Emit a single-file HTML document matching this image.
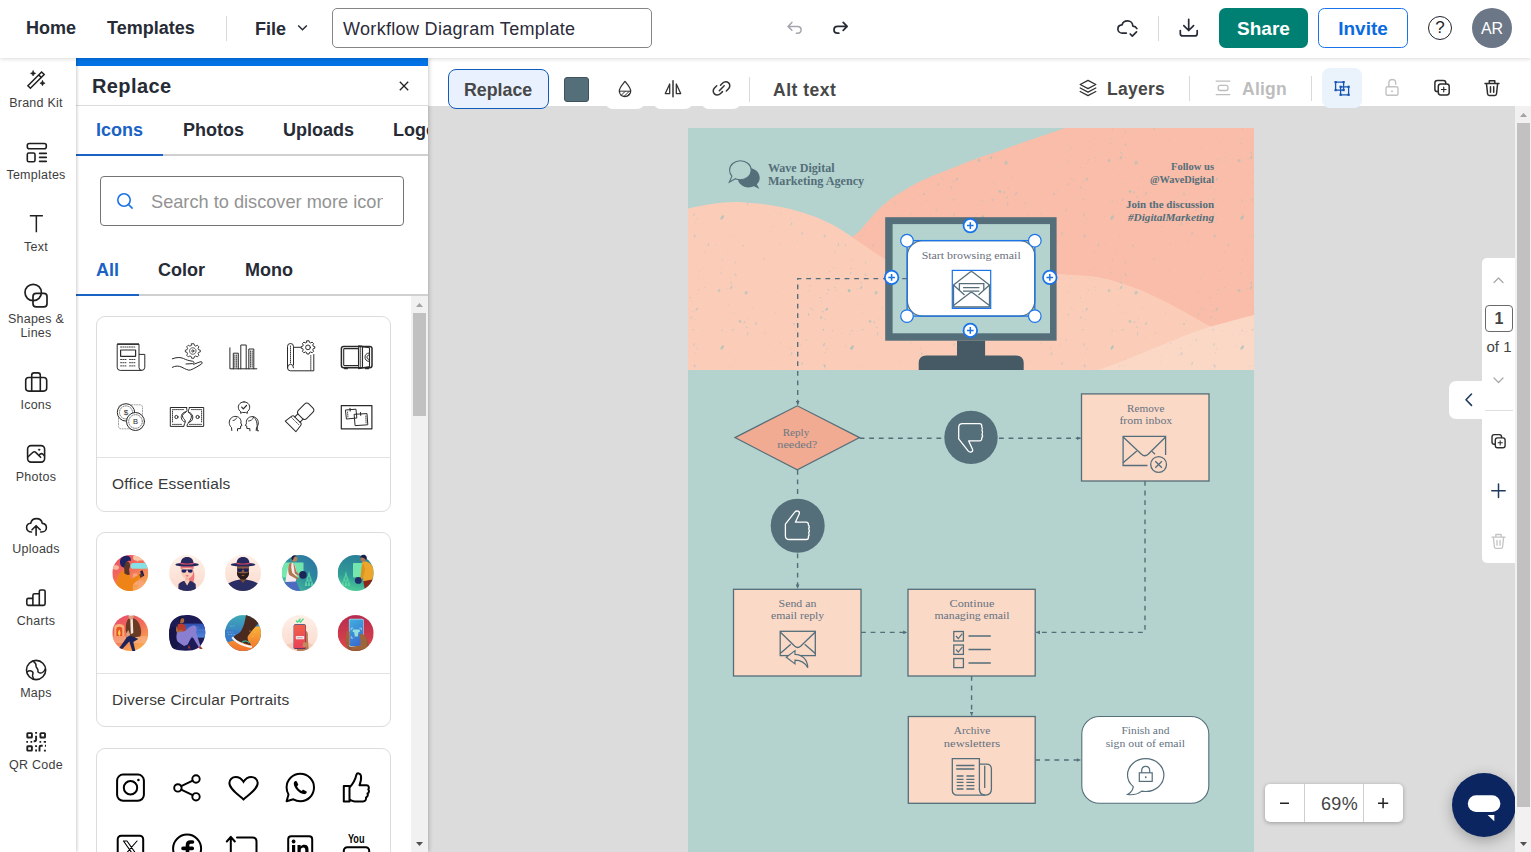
<!DOCTYPE html>
<html lang="en">
<head>
<meta charset="utf-8">
<title>Workflow Diagram Template</title>
<style>
*{box-sizing:border-box;margin:0;padding:0}
html,body{width:1531px;height:852px;overflow:hidden;background:#fff;font-family:"Liberation Sans",sans-serif;color:#2b2f38}
.abs{position:absolute}
svg{display:block;overflow:visible}
/* header */
#hdr{position:absolute;left:0;top:0;width:1531px;height:58px;background:#fff;box-shadow:0 1px 4px rgba(0,0,0,.15);z-index:30}
#hdr .nav{position:absolute;top:17px;font-weight:bold;font-size:18px;line-height:22px;color:#262b36;white-space:nowrap}
.vdiv{position:absolute;width:1px;background:#d9d9d9}
#title{position:absolute;left:332px;top:8px;width:320px;height:40px;border:1px solid #858585;border-radius:5px;font-size:18px;line-height:40px;padding-left:10px;color:#2b2b3a;white-space:nowrap;letter-spacing:.32px}
.btn{position:absolute;top:8px;height:40px;border-radius:6.5px;font-weight:bold;font-size:19px;line-height:42px;text-align:center}
/* sidebar */
#side{position:absolute;left:0;top:57px;width:76px;height:795px;background:#fff;z-index:20;box-shadow:1px 0 3px rgba(0,0,0,.2)}
.sitem{position:absolute;left:0;width:72px;text-align:center;font-size:12.5px;line-height:14px;color:#3d3d3d;letter-spacing:.25px}
.sicon{position:absolute;left:24px;width:24px;height:24px}
/* panel */
#panel{position:absolute;left:76px;top:58px;width:352px;height:794px;background:#fff;z-index:10;overflow:hidden;box-shadow:1px 0 4px rgba(0,0,0,.22)}
.ptab{position:absolute;top:61px;font-weight:bold;font-size:18px;line-height:22px;color:#262b36;white-space:nowrap}
.stab{position:absolute;top:201px;font-weight:bold;font-size:18px;line-height:22px;color:#262b36;white-space:nowrap}
.card{position:absolute;left:20px;width:295px;border:1px solid #dcdcdc;border-radius:9px;background:#fff}
.card .lbl{position:absolute;left:15px;font-size:15.5px;line-height:18px;color:#3a3a3a;white-space:nowrap;letter-spacing:.2px}
.card .hr{position:absolute;left:0;right:0;height:1px;background:#e2e2e2}
/* toolbar */
#tbar{position:absolute;left:428px;top:58px;width:1103px;height:48px;background:#fff;z-index:5}
.tbtxt{position:absolute;font-weight:bold;font-size:18px;line-height:22px;white-space:nowrap}
/* canvas */
#canvas{position:absolute;left:428px;top:106px;width:1088px;height:746px;background:#dcdcdc;overflow:hidden}
#vscroll{position:absolute;left:1515px;top:106px;width:16px;height:746px;background:#f1f1f1;z-index:6}
</style>
</head>
<body>

<!-- ================= HEADER ================= -->
<div id="hdr">
  <div class="nav" style="left:26px">Home</div>
  <div class="nav" style="left:107px">Templates</div>
  <div class="vdiv" style="left:226px;top:16px;height:25px"></div>
  <div class="nav" style="left:255px;top:18px">File</div>
  <svg class="abs" style="left:297px;top:24px" width="11" height="8" viewBox="0 0 11 8"><path d="M1.2 1.5 L5.5 5.8 L9.8 1.5" fill="none" stroke="#262b36" stroke-width="1.5"/></svg>
  <div id="title">Workflow Diagram Template</div>
  <svg class="abs" style="left:780px;top:14px" width="80" height="28" viewBox="780 14 80 28" fill="none" stroke-linecap="round" stroke-linejoin="round">
    <path d="M791.900 22.400 L788 26.400 L791.900 30.300 M788 26.400 L797.600 26.400 Q801.100 26.400 801.100 29.800 Q801.100 33.200 797.600 33.200 L796.300 33.200" stroke="#a3a6ad" stroke-width="1.500"/>
    <path d="M843.200 22.400 L847.100 26.400 L843.200 30.300 M847.100 26.400 L837.500 26.400 Q834 26.400 834 29.800 Q834 33.200 837.500 33.200 L838.800 33.200" stroke="#262b36" stroke-width="1.800"/>
  </svg>
  <svg class="abs" style="left:1110px;top:14px" width="100" height="28" viewBox="1110 14 100 28" fill="none" stroke="#262b36" stroke-width="1.700" stroke-linecap="round" stroke-linejoin="round">
    <path d="M1126.300 33.100 L1122.400 33.100 C1119.900 33.100 1117.900 31.200 1117.900 28.900 C1117.900 26.600 1119.700 24.900 1122.100 24.800 C1122.700 22.500 1124.900 20.900 1127.500 20.900 C1130.500 20.900 1132.800 23.200 1132.800 26.100 C1134.600 26.200 1136.100 27.100 1136.900 28.600"/>
    <path d="M1130.200 34 L1132.300 36.100 L1136.500 31.900"/>
    <path d="M1188.700 19.300 L1188.700 30.400 M1183.800 25.600 L1188.700 30.500 L1193.600 25.600"/>
    <path d="M1180.300 30.500 L1180.300 33.400 Q1180.300 35.900 1182.800 35.900 L1194.700 35.900 Q1197.200 35.900 1197.200 33.400 L1197.200 30.500"/>
  </svg>
  <div class="vdiv" style="left:1158px;top:16px;height:25px"></div>
  <div class="abs" style="left:1428px;top:16px;width:24px;height:24px;border:1.500px solid #1f232b;border-radius:50%;font-size:17px;line-height:21px;text-align:center;color:#1f232b">?</div>
  <div class="btn" style="left:1219px;width:89px;background:#008073;color:#fff">Share</div>
  <div class="btn" style="left:1318px;width:90px;border:1.500px solid #1a73e8;color:#0a6be0;line-height:39px">Invite</div>
  <div class="abs" style="left:1472px;top:8px;width:40px;height:40px;border-radius:50%;background:#6b7787;color:#fff;font-size:16px;line-height:42px;text-align:center">AR</div>
</div>

<!-- ================= SIDEBAR ================= -->
<div id="side">
  <svg class="abs" style="left:0;top:0" width="76" height="795" viewBox="0 57 76 795" fill="none" stroke="#1f1f1f" stroke-width="1.600" stroke-linecap="round" stroke-linejoin="round">
    <!-- brand kit wand -->
    <path d="M27.900 85.800 L41.600 72 L44.200 74.500 L30.400 88.200Z M38.700 74.900 L41.300 77.500" stroke-width="1.500" stroke-linejoin="miter"/>
    <path d="M33.100 70.800 Q33.400 73.100 35.700 73.400 Q33.400 73.700 33.100 76 Q32.800 73.700 30.500 73.400 Q32.800 73.100 33.100 70.800Z M42.500 80.600 Q42.800 82.900 45.100 83.200 Q42.800 83.500 42.500 85.800 Q42.200 83.500 39.900 83.200 Q42.200 82.900 42.500 80.600Z" fill="#1f1f1f" stroke-width="0.600"/>
    <!-- templates -->
    <rect x="27.300" y="143.500" width="19" height="5.200" rx="2"/>
    <rect x="27.300" y="153" width="7.700" height="8.700" rx="1.500"/>
    <path d="M39.600 153.400 L46.300 153.400 M39.600 157.400 L46.300 157.400 M39.600 161.400 L46.300 161.400"/>
    <!-- text -->
    <path d="M29.800 215.800 L42.900 215.800 M36.350 215.800 L36.350 232.200" stroke-width="1.500" stroke-linecap="butt"/>
    <!-- shapes -->
    <circle cx="33.200" cy="292.500" r="8.200" stroke-width="1.700"/>
    <rect x="33" y="293.400" width="14" height="13.500" rx="3.200" stroke-width="1.700"/>
    <!-- icons briefcase -->
    <rect x="25.700" y="377.500" width="21" height="13.600" rx="3"/>
    <path d="M31.700 391 L31.700 375.300 Q31.700 372.900 34.100 372.900 L37.900 372.900 Q40.300 372.900 40.300 375.300 L40.300 391"/>
    <!-- photos -->
    <rect x="27.600" y="445.600" width="17" height="16.500" rx="3.500"/>
    <path d="M27.800 457 L32.700 452.500 Q34.400 451 36 452.600 L40.600 457.300 M38.800 455.500 L40.200 454.200 Q41.600 453 42.900 454.300 L44.400 455.800"/>
    <circle cx="39.100" cy="449.700" r="0.700" fill="#1f1f1f" stroke-width="0.800"/>
    <!-- uploads -->
    <path d="M31.500 532 C28.500 532 26.600 530 26.600 527.600 C26.600 525.200 28.400 523.400 30.700 523.300 C31.300 520.500 33.700 518.600 36.500 518.600 C39.400 518.600 41.800 520.600 42.300 523.400 C44.700 523.600 46.400 525.400 46.400 527.700 C46.400 530.100 44.500 532 41.700 532 L40.700 532"/>
    <path d="M36.100 535.200 L36.100 526 M32 529.800 L36.100 525.700 L40.200 529.800"/>
    <!-- charts -->
    <path d="M32.900 605.400 L28.400 605.400 Q26.800 605.400 26.800 603.800 L26.800 600 Q26.800 598.400 28.400 598.400 L32.900 598.400 M39.300 605.400 L32.900 605.400 L32.900 595.400 Q32.900 593.800 34.500 593.800 L39.300 593.800 M39.300 605.400 L39.300 591.600 Q39.300 590 40.900 590 L43.500 590 Q45.100 590 45.100 591.600 L45.100 603.800 Q45.100 605.400 43.500 605.400Z"/>
    <!-- maps -->
    <circle cx="36.100" cy="670" r="9.600"/>
    <path d="M33.200 661.200 C35.500 663 36.300 664.600 36 666 C35.700 667.400 38.500 669 38 671 C37.500 673 41 673.500 42.500 672.500 C43.600 671.700 44.800 670.400 45.300 669 M27 672 C28.500 670.800 30.500 670.300 32 671.300 C33.500 672.300 33.200 673.500 32.600 675 C32.100 676.200 33.300 677.500 33.500 678.900" stroke-width="1.500"/>
    <!-- qr -->
    <g stroke-width="1.900" stroke-linejoin="miter" stroke-linecap="butt">
      <rect x="27.300" y="733.100" width="4.600" height="4.400" rx="0.600"/>
      <rect x="40.400" y="733.100" width="4.600" height="4.400" rx="0.600"/>
      <rect x="27.300" y="746.200" width="4.600" height="4.400" rx="0.600"/>
      <path d="M36.100 732.100 L36.100 733.700 M36.100 735.800 L36.100 739.600 Q36.100 741.200 34.500 741.200 L33.700 741.200 M26.300 741.900 L28 741.900 M30.500 741.900 L32.200 741.900 M39.500 741.900 L41.200 741.900 M43.700 741.900 L46 741.900 M36.100 745.300 L36.100 747 M36.100 749.400 L36.100 751.500 M39.500 751.500 L39.500 747.200 Q39.500 745.800 40.900 745.800 L42.700 745.800 M44.900 745.800 L46 745.800 M44.900 749.800 L44.900 751.500"/>
    </g>
  </svg>
  <div class="sitem" style="top:39px">Brand Kit</div>
  <div class="sitem" style="top:111px">Templates</div>
  <div class="sitem" style="top:183px">Text</div>
  <div class="sitem" style="top:255px">Shapes &amp;<br>Lines</div>
  <div class="sitem" style="top:341px">Icons</div>
  <div class="sitem" style="top:413px">Photos</div>
  <div class="sitem" style="top:485px">Uploads</div>
  <div class="sitem" style="top:557px">Charts</div>
  <div class="sitem" style="top:629px">Maps</div>
  <div class="sitem" style="top:701px">QR Code</div>
</div>

<!-- ================= PANEL ================= -->
<div id="panel">
  <div class="abs" style="left:0;top:0;width:352px;height:8px;background:#0072e5"></div>
  <div class="abs" style="left:16px;top:16px;font-weight:bold;font-size:20px;line-height:24px;color:#262b36;letter-spacing:.4px">Replace</div>
  <svg class="abs" style="left:323px;top:23px" width="10" height="10" viewBox="0 0 10 10"><path d="M0.8 0.8 L9.2 9.2 M9.2 0.8 L0.8 9.2" stroke="#222" stroke-width="1.3" fill="none"/></svg>
  <div class="abs" style="left:0;top:47px;width:352px;height:1px;background:#dcdcdc"></div>
  <div class="ptab" style="left:20px;color:#1a62c4">Icons</div>
  <div class="ptab" style="left:107px">Photos</div>
  <div class="ptab" style="left:207px">Uploads</div>
  <div class="ptab" style="left:317px">Logos</div>
  <div class="abs" style="left:0;top:96px;width:352px;height:2px;background:#d0d0d0"></div>
  <div class="abs" style="left:0;top:96px;width:87px;height:2px;background:#1a62c4"></div>
  <div class="abs" style="left:24px;top:118px;width:304px;height:50px;border:1px solid #747474;border-radius:4px"></div>
  <svg class="abs" style="left:40px;top:134px" width="18" height="18" viewBox="0 0 18 18"><circle cx="8" cy="8" r="6.2" fill="none" stroke="#1a73e8" stroke-width="1.6"/><path d="M12.6 12.6 L16.6 16.6" stroke="#1a73e8" stroke-width="1.6"/></svg>
  <div class="abs" style="left:75px;top:133px;width:232px;overflow:hidden;font-size:18.2px;line-height:22px;color:#939393;white-space:nowrap">Search to discover more icons</div>
  <div class="stab" style="left:20px;color:#1a62c4">All</div>
  <div class="stab" style="left:82px">Color</div>
  <div class="stab" style="left:169px">Mono</div>
  <div class="abs" style="left:0;top:236px;width:352px;height:2px;background:#d0d0d0"></div>
  <div class="abs" style="left:0;top:236px;width:63px;height:2px;background:#1a62c4"></div>
  <!-- panel scrollbar -->
  <div class="abs" style="left:335px;top:238px;width:17px;height:556px;background:#f1f1f1"></div>
  <div class="abs" style="left:337px;top:255px;width:13px;height:103px;background:#c1c1c1"></div>
  <svg class="abs" style="left:340px;top:245px" width="7" height="4" viewBox="0 0 7 4"><path d="M0 4 L3.500 0 L7 4Z" fill="#a3a3a3"/></svg>
  <svg class="abs" style="left:340px;top:784px" width="7" height="4" viewBox="0 0 7 4"><path d="M0 0 L3.500 4 L7 0Z" fill="#505050"/></svg>

  <svg class="abs" style="left:0;top:0;z-index:2" width="336" height="794" viewBox="76 58 336 794" fill="none" stroke="#2a2a2a" stroke-width="1" stroke-linejoin="round" stroke-linecap="round">
    <!-- ===== card 1 : office essentials ===== -->
    <!-- 1 newspaper -->
    <path d="M139 354.400 L144.800 354.400 L144.800 367.200 Q144.800 370.400 141.600 370.400 L120.300 370.400 Q117.200 370.400 117.200 367.300 L117.200 344.200 L139 344.200 L139 367.400 Q139 370.400 141.900 370.400" stroke-linejoin="miter" stroke-linecap="butt"/><path d="M117.200 344.100 L139 344.100" stroke-width="1.400" stroke-linecap="butt"/>
    <rect x="120.600" y="350" width="15" height="6.400" rx="0.300" stroke-width="1.200"/>
    <path d="M120.600 347 L135.600 347 M120.600 359.500 L126.500 359.500 M129.500 359.500 L135.600 359.500 M120.600 362.700 L126.500 362.700 M129.500 362.700 L135.600 362.700 M120.600 365.900 L126.500 365.900 M129.500 365.900 L135.600 365.900" stroke-dasharray="1 1.200" stroke-width="0.900"/>
    <!-- 2 hand + gear -->
    <g transform="translate(192.800 351) scale(0.900)">
      <path d="M-1.300 -7.800 L1.300 -7.800 L1.800 -5.900 L3.300 -5.200 L5 -6.200 L6.800 -4.400 L5.800 -2.700 L6.400 -1.200 L8.300 -0.700 L8.300 1.300 L6.400 1.800 L5.800 3.300 L6.800 5 L5 6.800 L3.300 5.800 L1.800 6.400 L1.300 8.300 L-1.300 8.300 L-1.800 6.400 L-3.300 5.800 L-5 6.800 L-6.800 5 L-5.800 3.300 L-6.400 1.800 L-8.300 1.300 L-8.300 -0.700 L-6.400 -1.200 L-5.800 -2.700 L-6.800 -4.400 L-5 -6.200 L-3.300 -5.200 L-1.800 -5.900Z" transform="translate(0 -0.250)"/>
      <circle cx="0" cy="0" r="3.600" stroke-dasharray="0.800 0.900" stroke-width="0.900"/><circle cx="0" cy="0" r="1.200"/>
    </g>
    <path d="M172.300 358.800 C176 357.300 180.500 357 183.500 358.500 C186 359.800 189 360.800 192.500 361.200 C194.300 361.500 194.500 363.300 192.700 363.600 L186 364"/>
    <path d="M172.300 367.300 C175.500 365.600 179 365.700 182 367.300 C185 368.900 188.500 370.700 190.500 370 C194 368.700 198.500 366 201.500 364 C203 362.800 201.800 361.200 200 361.900 L193.600 364.300"/>
    <!-- 3 bar chart -->
    <path d="M229.900 347.800 L229.900 368.800 L256.800 368.800"/>
    <path d="M233.300 368.800 L233.300 353.200 L238.300 353.200 L238.300 368.800 M240.800 368.800 L240.800 345 L246.200 345 L246.200 368.800 M248.800 368.800 L248.800 349 L253.800 349 L253.800 368.800" stroke-linejoin="miter"/>
    <path d="M234.900 355 L234.900 368 M236.700 355 L236.700 368 M250.400 351 L250.400 368 M252.200 351 L252.200 368" stroke-dasharray="0.900 1" stroke-width="0.900"/>
    <!-- 4 blueprint + gear -->
    <g transform="translate(308 347.400) scale(0.820)">
      <path d="M-1.300 -7.800 L1.300 -7.800 L1.800 -5.900 L3.300 -5.200 L5 -6.200 L6.800 -4.400 L5.800 -2.700 L6.400 -1.200 L8.300 -0.700 L8.300 1.300 L6.400 1.800 L5.800 3.300 L6.800 5 L5 6.800 L3.300 5.800 L1.800 6.400 L1.300 8.300 L-1.300 8.300 L-1.800 6.400 L-3.300 5.800 L-5 6.800 L-6.800 5 L-5.800 3.300 L-6.400 1.800 L-8.300 1.300 L-8.300 -0.700 L-6.400 -1.200 L-5.800 -2.700 L-6.800 -4.400 L-5 -6.200 L-3.300 -5.200 L-1.800 -5.900Z" transform="translate(0 -0.250)" stroke-width="1.200"/>
      <circle cx="0" cy="0" r="2.900" stroke-width="1.200"/>
    </g>
    <path d="M300.500 347.300 L293.500 347.300 M293.500 365 L293.500 346.500 Q293.500 343.500 290.500 343.500 Q287.500 343.500 287.500 346.500 L287.500 367.800 Q287.500 370.800 290.500 370.800 L313.800 370.800 L313.800 354.500 M287.500 367.800 Q287.500 364.300 290.500 364.300 Q293.500 364.300 293.500 367.800"/>
    <path d="M290.500 346 L290.500 364 M310.800 355.500 L310.800 370" stroke-dasharray="0.900 1.100" stroke-width="0.900"/>
    <!-- 5 safe -->
    <rect x="341.400" y="346.400" width="30.600" height="21.400" rx="2.200" stroke-width="1.500"/>
    <rect x="343.700" y="348.600" width="14.800" height="17" rx="0.800" stroke-width="1.100"/>
    <path d="M358.700 345.700 L362.500 346.400 L362.500 368 L358.700 368.600Z M362.500 346.600 L369.500 347.800 L369.500 366.600 L362.500 367.800" stroke-width="1.100"/>
    <path d="M369 353 C366.500 353 365 355 365 357.200 C365 359.400 366.500 361.400 369 361.400 M369 355 C367.700 355 367 356 367 357.200 C367 358.400 367.700 359.400 369 359.400"/>
    <path d="M360.600 347.500 L360.600 367" stroke-dasharray="0.900 1.100" stroke-width="0.900"/>
    <path d="M344.500 368.600 L347.500 368.600 M365.500 368.600 L368.500 368.600" stroke-width="1.400"/>
    <!-- 6 coins -->
    <rect x="118.500" y="404.800" width="24" height="24" rx="2.500" stroke-dasharray="1.200 1.400" stroke-width="0.800" stroke="#8c8c8c"/>
    <circle cx="126" cy="412.400" r="8.700" fill="#fff"/>
    <circle cx="126" cy="412.400" r="6.500" stroke-dasharray="0.500 1.300" stroke-width="0.900" stroke="#555"/>
    <circle cx="135.500" cy="421.500" r="9" fill="#fff"/>
    <circle cx="135.500" cy="421.500" r="6.800" stroke-dasharray="0.500 1.300" stroke-width="0.900" stroke="#555"/>
    <g font-family="'Liberation Sans',sans-serif" font-size="8" fill="#2a2a2a" stroke="none" text-anchor="middle"><text x="126" y="415.300">$</text><text x="135.600" y="424.400" font-size="7.500">B</text></g>
    <!-- 7 torn banknote -->
    <path d="M186.500 407.500 L170.300 407.500 L170.300 426.400 L184 426.400 C183.500 424.500 185.800 423 185.300 421 C184.800 419 182 418 182.500 415.500 C183 413 186.800 412.500 187 410.500 C187.100 409.500 186.400 408.500 186.500 407.500Z"/>
    <path d="M189.500 407.500 L203.700 407.500 L203.700 426.400 L187 426.400 C186.500 424.500 188.800 423 189.500 421.500 C190.500 419.500 191.800 418 191.300 415.500 C190.800 413 188 413 188.200 411 C188.300 409.800 189.600 408.800 189.500 407.500Z"/>
    <circle cx="176.400" cy="417" r="1.600"/><circle cx="197.600" cy="417" r="1.600"/><path d="M185.800 411.800 C182.500 412.300 181 415 181.300 417.500 C181.500 419.800 183 421.500 184.600 422 M188.600 412.300 C191.500 412.800 193 415.500 192.800 418 C192.500 420.500 190.800 422.300 188.300 422.400"/>
    <path d="M172.500 409.600 L184.500 409.600 M172.500 424.400 L182 424.400 M191.500 409.600 L201.600 409.600 M189.500 424.400 L201.600 424.400 M172.500 411 L172.500 423 M201.600 411 L201.600 423" stroke-dasharray="0.900 1.100" stroke-width="0.900"/>
    <!-- 8 people + check bubble -->
    <path d="M244 401.900 C247.200 401.900 249.700 404.200 249.700 407.200 C249.700 409.200 248.700 410.800 247.200 411.700 L247.400 413.300 L245.400 412.400 C244.900 412.500 244.500 412.500 244 412.500 C243.500 412.500 243.100 412.500 242.600 412.400 L240.600 413.300 L240.800 411.700 C239.300 410.800 238.300 409.200 238.300 407.200 C238.300 404.200 240.800 401.900 244 401.900Z"/>
    <path d="M241.700 407.200 L243.300 408.800 L246.500 405.500" stroke-width="1.200"/>
    <path d="M231.800 430.500 L231.500 427.500 C229 425.500 228.500 421.500 230.500 418.800 C232.500 416 237 415.500 239.500 418 C241 419.500 241.300 421.500 240.800 423 L242 425.500 L240.700 426 L240.500 428.500 L237.500 428.700 L237.500 430.800"/>
    <path d="M256.200 430.500 L256.500 427.500 C259 425 258.800 420.500 256.500 418.300 C254 416 249.500 416 247.500 418.800 C246.200 420.500 246.200 422 246.500 423.200 L245.300 425.500 L246.700 426 L246.900 428.500 L249.900 428.700 L249.900 430.800 M253 416.800 C256.500 418.500 257.500 423 257.300 430.800 L258.500 430.800"/>
    <path d="M233 420.500 C234.500 420.500 236 419.500 236.500 418 M248.500 421 C250.500 421 253 419.500 253.500 417.500" stroke-width="0.900"/>
    <!-- 9 stamp -->
    <g transform="translate(300.200 416.800) rotate(45)">
      <rect x="-5.900" y="-15.200" width="11.700" height="14.800" rx="3.200"/>
      <path d="M-3.700 -0.400 L-3.700 3.900 M3.700 -0.400 L3.700 3.900"/>
      <path d="M-5 3.900 L5 3.900 Q6.200 4.200 6.400 5.500 L7.500 13.600 L-7.500 13.600 L-6.400 5.500 Q-6.200 4.200 -5 3.900Z"/>
      <path d="M-5.500 6.600 L5.500 6.600" stroke-dasharray="1 1.200" stroke-width="0.800"/>
    </g>
    <!-- 10 board with notes -->
    <rect x="341.300" y="405.600" width="30.600" height="23.200" stroke-width="1.200"/>
    <path d="M345.800 410 L356 409.200 L356.800 418 L346.800 419Z M354.500 414.300 L367 413.600 L367.800 424.800 L355.500 425.600Z"/>
    <path d="M350 408.300 L350.200 411 M360.500 412.500 L360.700 415.300" stroke-width="1.100"/>
    <path d="M347.600 412 L347.900 417 M365.800 416 L366.100 423" stroke-dasharray="0.900 1.100" stroke-width="0.800"/>
    <!-- ===== card 3 : social ===== -->
    <g stroke="#000" stroke-width="2" fill="none">
      <!-- instagram -->
      <rect x="117.100" y="774.600" width="26.800" height="26.200" rx="6"/>
      <circle cx="130.500" cy="787.800" r="6.700"/>
      <circle cx="138.400" cy="780" r="1.300" fill="#000" stroke="none"/>
      <!-- share -->
      <g stroke-width="1.900">
        <circle cx="177.900" cy="787.900" r="3.700"/><circle cx="196" cy="779" r="3.700"/><circle cx="196" cy="796.800" r="3.700"/>
        <path d="M181.200 786.200 L192.700 780.600 M181.200 789.600 L192.700 795.200"/>
      </g>
      <!-- heart -->
      <path d="M243.500 799.400 C238 794.500 229.400 789 229.400 783 C229.400 779.400 232.300 777 235.700 777 C238.800 777 241.600 778.800 243.500 781.800 C245.400 778.800 248.200 777 251.300 777 C254.700 777 257.700 779.400 257.700 783 C257.700 789 249 794.500 243.500 799.400Z" stroke-linejoin="miter"/>
      <!-- whatsapp -->
      <path d="M300.300 773.800 C307.900 773.800 314 779.900 314 787.500 C314 795.100 307.900 801.200 300.300 801.200 C297.800 801.200 295.400 800.500 293.400 799.300 L286.600 801.200 L288.500 794.500 C287.300 792.500 286.600 790.100 286.600 787.500 C286.600 779.900 292.700 773.800 300.300 773.800Z" stroke-linejoin="round"/>
      <path d="M295.400 781 C294.300 781.400 293.600 782.600 293.800 783.900 C294.500 788.300 298.600 792.800 303.500 794.100 C304.800 794.400 306.200 793.800 306.700 792.600 C306.900 792 306.700 791.500 306.200 791.200 L303.800 789.900 C303.300 789.600 302.700 789.800 302.400 790.200 L301.800 791 C300 790.300 297.800 788.200 297 786.200 L297.800 785.600 C298.200 785.300 298.400 784.700 298.100 784.200 L296.900 781.600 C296.600 781 296 780.800 295.400 781Z" fill="#000" stroke="none"/>
      <!-- thumbs up -->
      <path d="M343.800 786 L349.500 786 L349.500 801.500 L343.800 801.500Z M349.500 787.500 C353 784 355.300 779.500 356.500 774.500 C357 772.800 360.500 772.800 361 776 C361.500 779 360.500 782.500 359.500 785.300 L366.500 785.300 C368.800 785.300 369.500 787.800 368.300 789.300 C369.500 790.800 369 792.800 367.500 793.500 C368.300 795.300 367.500 797 366 797.500 C366.500 800 365 801.500 363 801.500 L355 801.500 C353 801.500 351.500 800.300 349.500 799.800" stroke-linejoin="round"/>
      <!-- x -->
      <rect x="117.700" y="835.800" width="25.500" height="26" rx="3.500"/>
      <path d="M123.500 841 L127 841 L137.500 856 L134 856Z M137 841 L124 856" stroke-width="1.100"/>
      <!-- facebook -->
      <circle cx="187.100" cy="848.600" r="14"/>
      <path d="M192.500 842 L190.500 842 C188.300 842 187.500 843.300 187.500 845.300 L187.500 862 M183 848.400 L192.300 848.400" stroke-width="3.600"/>
      <!-- repost -->
      <path d="M230.800 862 L230.800 837 M226.800 841.500 L230.800 836.800 L234.800 841.500 M237 837.600 L252.500 837.600 Q256.500 837.600 256.500 841.600 L256.500 862"/>
      <!-- linkedin -->
      <rect x="288.200" y="836.200" width="24" height="26" rx="3"/>
      <g fill="#000" stroke="none"><circle cx="293.600" cy="841.500" r="1.900"/><rect x="292" y="845" width="3.200" height="12"/><path d="M297.500 845 L300.600 845 L300.600 846.600 C301.500 845.300 302.800 844.700 304.400 844.700 C307.200 844.700 308.500 846.500 308.500 849.500 L308.500 857 L305.300 857 L305.300 850 C305.300 848.400 304.700 847.500 303.300 847.500 C301.800 847.500 300.700 848.500 300.700 850.300 L300.700 857 L297.500 857Z"/></g>
      <!-- youtube -->
      <rect x="343.800" y="847.200" width="25.400" height="14" rx="3.500"/>
      <text x="356.200" y="843.200" font-family="'Liberation Sans',sans-serif" font-weight="bold" font-size="12.500" fill="#000" stroke="none" text-anchor="middle" textLength="16.500" lengthAdjust="spacingAndGlyphs">You</text>
    </g>
  </svg>
  <!-- card 1 -->
  <div class="card" style="top:258px;height:196px">
    
    <div class="hr" style="top:140px"></div>
    <div class="lbl" style="top:158px">Office Essentials</div>
  </div>
  <svg class="abs" style="left:0;top:0;z-index:2" width="336" height="794" viewBox="76 58 336 794" stroke="none">
    <defs>
      <clipPath id="pc"><circle cx="0" cy="0" r="18"/></clipPath>
      <linearGradient id="g1" x1="0" y1="0" x2="0.600" y2="1"><stop offset="0" stop-color="#e8486a"/><stop offset="0.550" stop-color="#f2705a"/><stop offset="1" stop-color="#f8a850"/></linearGradient>
      <linearGradient id="g2" x1="0" y1="0" x2="0" y2="1"><stop offset="0" stop-color="#fef0e8"/><stop offset="1" stop-color="#fbd9cc"/></linearGradient>
      <linearGradient id="g4" x1="1" y1="0" x2="0" y2="1"><stop offset="0" stop-color="#2c6fa6"/><stop offset="0.500" stop-color="#2f8f9c"/><stop offset="1" stop-color="#52d69a"/></linearGradient>
      <linearGradient id="g5" x1="0.500" y1="0" x2="0.300" y2="1"><stop offset="0" stop-color="#2a7f98"/><stop offset="0.600" stop-color="#319c96"/><stop offset="1" stop-color="#4fd096"/></linearGradient>
      <linearGradient id="g8" x1="0" y1="0" x2="0" y2="1"><stop offset="0" stop-color="#3fa9b4"/><stop offset="0.450" stop-color="#3a86c4"/><stop offset="1" stop-color="#2f6fc0"/></linearGradient>
      <linearGradient id="g8b" x1="0" y1="0" x2="0" y2="1"><stop offset="0" stop-color="#f8b53a"/><stop offset="1" stop-color="#f2702a"/></linearGradient>
      <linearGradient id="g10" x1="0" y1="0" x2="0" y2="1"><stop offset="0" stop-color="#b62c50"/><stop offset="1" stop-color="#e04848"/></linearGradient>
      <linearGradient id="g10p" x1="0" y1="0" x2="0.400" y2="1"><stop offset="0" stop-color="#3fb0e0"/><stop offset="1" stop-color="#3a6fd0"/></linearGradient>
      <linearGradient id="g9p" x1="0" y1="0" x2="0" y2="1"><stop offset="0" stop-color="#f0604a"/><stop offset="1" stop-color="#e8405a"/></linearGradient>
    </defs>
    <!-- p1: woman with phone -->
    <g transform="translate(130.300 573)"><g clip-path="url(#pc)">
      <rect x="-18" y="-18" width="36" height="36" fill="url(#g1)"/>
      <rect x="2.800" y="-18.300" width="11" height="5.800" rx="2.700" fill="#fbc9a6"/>
      <path d="M6 -12.800 L7.500 -11 L8.500 -12.800Z" fill="#fbc9a6"/>
      <rect x="-17.500" y="-7.800" width="6.200" height="4.500" rx="2.200" fill="#f9b69a"/>
      <rect x="2.800" y="0.500" width="4.200" height="11" rx="1" fill="#fbb08a" opacity="0.750"/>
      <rect x="7.500" y="7.500" width="5.800" height="8" rx="1" fill="#fba888" opacity="0.650"/>
      <path d="M-14 18 C-14.500 10 -13 2 -9 -1.500 C-6.500 -3 -3.500 -2.500 -2 -0.500 L1 6 L9.500 1 L11.500 3.800 L2.500 11.500 L2.500 18Z" fill="#ee8418"/>
      <path d="M-6 -5 L-1.500 -5 L-0.500 1.500 C-2.500 2.500 -5 1.500 -6 0Z" fill="#5c3626"/>
      <path d="M-7 -11.500 C-4 -13 -0.500 -11.500 -0.300 -8 C-0.300 -6 -0.800 -4.500 -1.800 -3.500 C-3.500 -2.800 -5.500 -3.500 -6.500 -5Z" fill="#5c3626"/>
      <path d="M-10.300 -10 C-10.800 -15.500 -6.500 -17.800 -3 -17.200 C0.500 -16.500 1.200 -13.500 0.200 -11.800 C-2.500 -12.800 -4.800 -11.500 -5.300 -8.500 L-6.500 -5.500 C-8.800 -6 -10.100 -7.800 -10.300 -10Z" fill="#1e2262"/>
      <rect x="0.200" y="-10" width="17.800" height="5.800" rx="2.900" fill="#86e0e6"/>
      <path d="M9.800 -1.800 L12.300 -2.800 L14 2.800 L11.500 3.800Z" fill="#221e4a"/>
      <path d="M9 1.500 L11.500 0.300 L12.800 3.300 L10.200 5Z" fill="#5c3626"/>
    </g></g>
    <!-- p2: woman with hat -->
    <g transform="translate(187.100 573)"><g clip-path="url(#pc)">
      <rect x="-18" y="-18" width="36" height="36" fill="url(#g2)"/>
      <path d="M2 -6 C7 -5 8 2 7 6 C6.500 10 5 13 4 15 L0 12 C2 8 3 2 2 -6Z" fill="#f0787c"/>
      <path d="M-6 -7 L6 -7 L6 -1 C6 3 3 5.500 0 5.500 C-3 5.500 -6 3 -6 -1Z" fill="#f8cbb6"/>
      <path d="M-6.500 -8 C-4 -7 4 -7 6.500 -8 L6.500 -4 C3 -5.500 -3 -5.500 -6.500 -4Z" fill="#f0787c"/>
      <rect x="-2" y="4.500" width="4" height="5" fill="#f0b8a4"/>
      <path d="M-9 18 L-8.500 11 C-6 8.500 -3.500 8 -2.500 8 L0 12 L2.500 8 C3.500 8 6 8.500 8.500 11 L9 18Z" fill="#2a2b60"/>
      <path d="M-2.500 8 L0 12.500 L2.500 8 L2 7.500 L-2 7.500Z" fill="#f8cbb6"/>
      <path d="M-5.500 -3.600 L-0.800 -3.600 L-1 -1 C-2 0 -4.500 0 -5.300 -1Z M0.800 -3.600 L5.500 -3.600 L5.300 -1 C4.500 0 2 0 1 -1Z" fill="#1e2262"/>
      <rect x="-1" y="-3.400" width="2" height="0.800" fill="#1e2262"/>
      <ellipse cx="0" cy="2.800" rx="1.500" ry="0.600" fill="#e0506a"/>
      <path d="M-6.500 -8.500 C-6.500 -14 -4 -16 0 -16 C4 -16 6.500 -14 6.500 -8.500Z" fill="#27285e"/>
      <ellipse cx="0" cy="-8.300" rx="11.800" ry="1.900" fill="#27285e"/>
      <path d="M-6.600 -10.300 C-3 -9.400 3 -9.400 6.600 -10.300 L6.600 -9 C3 -8.200 -3 -8.200 -6.600 -9Z" fill="#e8506a"/>
    </g></g>
    <!-- p3: man with hat & beard -->
    <g transform="translate(243 573)"><g clip-path="url(#pc)">
      <rect x="-18" y="-18" width="36" height="36" fill="url(#g2)"/>
      <path d="M-18 18 L-15 10.500 C-11 8 -6 7 -3 6.500 L3 6.500 C6 7 11 8 15 10.500 L18 18Z" fill="#2a2d62"/>
      <path d="M-3 6.500 L0 10 L3 6.500 L3 3 L-3 3Z" fill="#7a4a30"/>
      <path d="M-6 -7 L6 -7 L6 -1 C6 3.500 3 6 0 6 C-3 6 -6 3.500 -6 -1Z" fill="#8c5a3c"/>
      <path d="M-6 -1.500 C-5 0 -3 0.500 0 0.300 C3 0.500 5 0 6 -1.500 L6 0 C6 4 3 6.500 0 6.500 C-3 6.500 -6 4 -6 0Z" fill="#2a1c1c"/>
      <ellipse cx="0" cy="2.400" rx="1.600" ry="0.600" fill="#8c5a3c"/>
      <path d="M-5.800 -4.400 L-0.800 -4.400 L-1 -1.800 C-2 -0.800 -4.600 -0.800 -5.400 -1.800Z M0.800 -4.400 L5.800 -4.400 L5.400 -1.800 C4.600 -0.800 2 -0.800 1 -1.800Z" fill="#1a1e55"/>
      <rect x="-1" y="-4.200" width="2" height="0.800" fill="#1a1e55"/>
      <path d="M-6.500 -8.500 C-6.500 -14 -4 -16 0 -16 C4 -16 6.500 -14 6.500 -8.500Z" fill="#27285e"/>
      <ellipse cx="0" cy="-8.300" rx="12.300" ry="1.900" fill="#27285e"/>
      <path d="M-6.600 -10.300 C-3 -9.400 3 -9.400 6.600 -10.300 L6.600 -9 C3 -8.200 -3 -8.200 -6.600 -9Z" fill="#d8485e"/>
    </g></g>
    <!-- p4: bowler left -->
    <g transform="translate(299.800 573)">
      <g clip-path="url(#pc)">
        <rect x="-18" y="-18" width="36" height="36" fill="url(#g4)"/>
        <rect x="-18" y="-10.500" width="21.700" height="15" rx="0.800" fill="#7ceeb0" opacity="0.900"/>
        <path d="M8.200 1.500 L9.200 -2 L10.200 1.500 L10.400 4.500 L8 4.500Z M6.700 6 L7.700 3 L8.700 6 L8.900 8.500 L6.500 8.500Z M9.700 6 L10.700 3 L11.700 6 L11.900 8.500 L9.500 8.500Z M5.200 10.500 L6.200 7.500 L7.200 10.500 L7.400 13 L5 13Z M8.200 10.500 L9.200 7.500 L10.200 10.500 L10.400 13 L8 13Z M11.200 10.500 L12.200 7.500 L13.200 10.500 L13.400 13 L11 13Z" fill="#62e0a8" opacity="0.800"/>
        <path d="M-14.500 8 L-4 7 L0.500 18 L-18 18Z" fill="#4d6cc0"/>
      </g>
      <path d="M-10.500 -9.500 C-8 -11.500 -5 -9.500 -4 -5 C-3 -1 -3 4 -4 8.500 L-14.500 9 C-13.500 4 -12.500 -4 -10.500 -9.500Z" fill="#f8eaee"/>
      <path d="M-10.500 -9.500 C-12 -6 -12 -1 -10.500 2 L-2.500 6.500 L-1.500 5 L-7.500 0 C-8.500 -3 -9 -7 -8 -10.500Z" fill="#b07850"/>
      <path d="M-6.500 -10 C-5 -8 -4 -4 -3.500 -1.500 L-0.500 1.500 L-1.500 2.800 L-5 0.500Z" fill="#b07850"/>
      <circle cx="-5.300" cy="-14.200" r="2.900" fill="#b8835a"/>
      <path d="M-8.300 -14 C-9 -17.500 -5 -18.800 -2.700 -16.800 C-4.500 -16.800 -6 -16.300 -6.300 -14.500 L-7 -12.500Z" fill="#1a1e4a"/>
      <circle cx="3.100" cy="1.900" r="3.800" fill="#1c2558"/>
    </g>
    <!-- p5: bowler right -->
    <g transform="translate(355.700 573)">
      <g clip-path="url(#pc)">
        <rect x="-18" y="-18" width="36" height="36" fill="url(#g5)"/>
        <rect x="-2.700" y="-10" width="11.400" height="14.400" rx="0.800" fill="#7ceeb0" opacity="0.900"/>
        <path d="M-10.800 1.500 L-9.800 -2 L-8.800 1.500 L-8.600 4.500 L-11 4.500Z M-12.300 6 L-11.300 3 L-10.300 6 L-10.100 8.500 L-12.500 8.500Z M-9.300 6 L-8.300 3 L-7.300 6 L-7.100 8.500 L-9.500 8.500Z M-13.800 10.500 L-12.800 7.500 L-11.800 10.500 L-11.600 13 L-14 13Z M-10.800 10.500 L-9.800 7.500 L-8.800 10.500 L-8.600 13 L-11 13Z M-7.800 10.500 L-6.800 7.500 L-5.800 10.500 L-5.600 13 L-8 13Z" fill="#62e0a8" opacity="0.700"/>
        <path d="M7.500 7.500 L16.500 5.500 L18 14 L9.500 18 L8.500 13Z" fill="#8a261c"/>
      </g>
      <path d="M6.500 -11.500 C9.500 -12.500 14.500 -11 16.500 -7 C18.300 -3.500 18.300 2 16.500 6.500 L7.500 8.300 C8 3 6.500 -4 6.500 -11.500Z" fill="#eda62c"/>
      <path d="M7 -10.500 C5.500 -6 5.300 -1 5 2.500 L4 7 L5.800 7.800 L8 3 L9.500 -4Z" fill="#dc9420"/>
      <path d="M4 6.500 L5.800 7.300 L5 9.500 L3.500 8.500Z" fill="#b8835a"/>
      <circle cx="7.700" cy="-14.300" r="2.800" fill="#b07850"/>
      <path d="M4.500 -15.200 C4.500 -18.800 9.500 -19.300 10.800 -16.500 C11.500 -15 10.800 -13.500 10.300 -12.800 C9 -15.300 6.500 -16 4.500 -15.200Z" fill="#1a1e4a"/>
      <circle cx="2.600" cy="7.400" r="3.400" fill="#1c2f68"/>
    </g>
    <!-- p6: man walking, fireplace -->
    <g transform="translate(130.300 633.100)">
      <g clip-path="url(#pc)">
        <rect x="-18" y="-18" width="36" height="36" fill="url(#g1)"/>
        <path d="M-16 3 L-16 -6 C-16 -10 -6 -10 -6 -6 L-6 3Z" fill="#f7b27a"/>
        <path d="M-14 3 L-14 -4 C-14 -7 -8 -7 -8 -4 L-8 3Z" fill="#e8502a"/>
        <path d="M-11 3 C-13 1 -12 -2 -11 -3.500 C-10 -2 -9 1 -11 3Z" fill="#ffd24a"/>
        <rect x="-18" y="3" width="36" height="7" fill="#f9b58a" opacity="0.600"/>
      </g>
      <path d="M-2 -14 C2 -17 7 -14 9 -9 C11 -4 11.500 0 10 3.500 L2 4.500 L-4 1 C-5 -4 -5 -10 -2 -14Z" fill="#6a3a22"/>
      <path d="M0 -14 L2.500 -14 L3 0 L0.500 1Z" fill="#f3e6e0"/>
      <circle cx="0.800" cy="-15.800" r="2.400" fill="#d9a080"/>
      <path d="M-1.800 -16.500 C-1.500 -19 3 -19 3.300 -16.800 C2 -17.500 0 -17.500 -1.800 -16.500Z" fill="#efe8e8"/>
      <path d="M-3 2 L4 4 L8 6 L3 9 L5 18 L2 18 L-1 8.500 L-8 16 L-11 15 L-4 5Z" fill="#1e2458"/>
      <path d="M-2 -3 L0 2 L-3 4 L-4.500 1Z" fill="#d9a080"/>
    </g>
    <!-- p7: woman sitting -->
    <g transform="translate(187.100 633.100)">
      <defs><clipPath id="p7c"><path d="M-17 -8 C-15 -16 -5 -19 2 -18 C10 -17.500 17 -12 18 -3 C19 5 15 12 11 15 C5 19 -8 18 -13 16 C-18 13 -19 0 -17 -8Z"/></clipPath>
      <linearGradient id="g7w" x1="0" y1="0" x2="0" y2="1"><stop offset="0" stop-color="#2f4fb0"/><stop offset="1" stop-color="#4f86dc"/></linearGradient></defs>
      <path d="M-17 -8 C-15 -16 -5 -19 2 -18 C10 -17.500 17 -12 18 -3 C19 5 15 12 11 15 C5 19 -8 18 -13 16 C-18 13 -19 0 -17 -8Z" fill="#1d1b56"/>
      <g clip-path="url(#p7c)">
        <rect x="-4" y="-9.500" width="24" height="14" fill="url(#g7w)"/>
        <path d="M2 -6 L12 -6 M6 -3 L18 -3" stroke="#6fa0ea" stroke-width="0.600" opacity="0.700" fill="none"/>
        <path d="M-18 -4 C-14 -8 -8 -7 -6 -2 C-5 4 -7 12 -12 16 L-19 14Z" fill="#171547"/>
      </g>
      <circle cx="-5.600" cy="-12.600" r="2.700" fill="#a86a44"/>
      <path d="M-8.400 -12 C-10 -16.800 -4.500 -18 -3 -15 C-4.800 -15.500 -6.800 -14.500 -6.800 -11.500 L-7.500 -8.500Z" fill="#15163c"/>
      <path d="M-9.500 -8.500 C-6.500 -10.500 -2.500 -9.500 -1.500 -6.500 L-1.500 -1 L-9 -0.500Z" fill="#b83a2c"/>
      <path d="M-10 -7.500 C-11.800 -4.500 -11.300 -1.500 -9.800 0.500 L-4.500 -2 L-5 -3.500 L-8.800 -2.500Z" fill="#a86a44"/>
      <path d="M-10 -0.500 L-2 -2 C1.500 -5.500 5.500 -8.500 7.800 -7.500 C9.800 -6.500 9.800 -3.500 9 -0.500 L13.500 13.500 L11.800 14.300 L5 3 L0.500 11.500 L-3 13 L-9 9 C-11 7 -11 2.500 -10 -0.500Z" fill="#8a7ed0"/>
      <path d="M11.600 14 L13.500 13.200 L15.600 15.800 L12.600 15.800Z M1.800 12 L3.500 15.500 L0.800 15.500Z" fill="#a83a26"/>
    </g>
    <!-- p8: foot in flip-flop -->
    <g transform="translate(243 633.100)"><g clip-path="url(#pc)">
      <rect x="-18" y="-18" width="36" height="36" fill="url(#g8)"/>
      <path d="M-18 9.500 C-12 8.500 -6 7 -2 4 L4 -5 L18 -7 L18 18 L-18 18Z" fill="url(#g8b)"/>
      <path d="M-18 -3 C-12 -4 -6 -3 -3 0 C-5 4 -12 8 -18 9Z" fill="#3b7cc8"/>
      <path d="M-16 -1 L-10 -1 M-15 1.500 L-8 1.500 M-13 -7 L-8 -7" stroke="#7cc4e0" stroke-width="0.700" stroke-dasharray="1.500 1.200" fill="none"/>
      <path d="M3 -18 L17 -18 L18 -12 C12 -6 8 -2 5 3 C4 5 5 8 7 10 L8 12.500 L-3 9 C-7 7 -9.500 5 -9 3.500 C-8 2 -4 1 -2 -2 C1 -7 2 -12 3 -18Z" fill="#4a2a20"/>
      <path d="M-10 3.500 C-8 7 0 11.500 9 13 L8.500 15 C0 14 -9 9 -11.500 5Z" fill="#f4f4f8"/>
      <path d="M-1 9.500 C1 7 5 7.500 6.500 10" stroke="#2fb8a0" stroke-width="1.200" fill="none"/>
      <circle cx="7" cy="-2" r="0.500" fill="#ffd86a"/><circle cx="10" cy="3" r="0.500" fill="#ffd86a"/><circle cx="12" cy="-1" r="0.500" fill="#ffd86a"/>
    </g></g>
    <!-- p9: hand with red phone -->
    <g transform="translate(299.800 633.100)"><g clip-path="url(#pc)">
      <rect x="-18" y="-18" width="36" height="36" fill="url(#g2)"/>
      <ellipse cx="0" cy="17" rx="18" ry="8" fill="#f3c3b0" opacity="0.700"/>
      <path d="M5 -2 C7.500 -3 8.500 0 8 4 L9 18 L-3 18 L-2 10Z" fill="#b57a50"/>
      <rect x="-6.200" y="-8.800" width="12.400" height="24.600" rx="1.600" fill="#35306a"/>
      <rect x="-5.800" y="-8" width="11.600" height="23.200" rx="1" fill="url(#g9p)"/>
      <rect x="-4" y="3" width="8.400" height="3.200" rx="0.500" fill="#fbe8e4"/>
      <path d="M-3 4.600 L3 4.600" stroke="#b0a0b8" stroke-width="0.900"/>
      <path d="M-3.800 -12.500 L-2.300 -11 L0.700 -14.500 M-0.800 -12.500 L0.700 -11 L3.700 -14.500" stroke="#4fd88a" stroke-width="1.400" fill="none"/>
      <path d="M3.500 9.500 C5.500 8.500 7.500 9.500 8 11.500 L6.500 14.500 L2.500 13.500Z" fill="#c48a5c"/>
    </g></g>
    <!-- p10: hand with blue phone -->
    <g transform="translate(355.700 633.100)"><g clip-path="url(#pc)">
      <rect x="-18" y="-18" width="36" height="36" fill="url(#g10)"/>
      <path d="M-18 -6 L18 -6 M-18 -1 L18 -1 M-18 4 L18 4" stroke="#c83a54" stroke-width="1.600" stroke-dasharray="2.500 1.500" opacity="0.500" fill="none"/>
      <path d="M-9 4 C-11 6 -10 14 -6 18 L13 18 C14 12 12 6 9 2 L6 4 L6 13 L-5 14Z" fill="#925a34"/>
      <rect x="-6.800" y="-14.300" width="14.800" height="28" rx="1.500" fill="#a8e0f0"/>
      <rect x="-6.200" y="-13.600" width="13.600" height="26.600" rx="1" fill="url(#g10p)"/>
      <path d="M-2.600 -3.500 L3.800 -3.500 L4.400 -1.500 L2.600 -0.500 L2.200 3.500 L-1 3.500 L-1.400 -0.500 L-3.200 -1.500Z" fill="#9fe8e0" opacity="0.900"/>
      <path d="M-4.500 -3 L-4.500 -5 L-2.500 -5 M3.700 -5 L5.700 -5 L5.700 -3 M-4.500 3 L-4.500 5 L-2.500 5" stroke="#d8f4fc" stroke-width="0.600" fill="none"/>
      <path d="M3.500 1.500 C5.500 0 8.500 1 10 4 C11.500 7 11.500 12 10.500 16 L-4 17 L-4.500 14 L4.500 12.500 C5.500 9 4.500 5 3.500 1.500Z" fill="#a0643a"/>
      <path d="M-9.300 -1.500 C-7.500 -2.500 -6 -2 -6 -0.500 L-6 1.500 L-9.300 2Z M-9.800 2.500 L-6 2 L-6 5 L-9.500 5.800Z M-9.600 6.300 L-6 5.500 L-6 8.500 L-9.300 9.500Z M-9.300 10 L-6 9 L-6 12 L-8.500 13Z" fill="#a0643a"/>
    </g></g>
  </svg>
  <!-- card 2 -->
  <div class="card" style="top:474px;height:195px">
    
    <div class="hr" style="top:140px"></div>
    <div class="lbl" style="top:158px">Diverse Circular Portraits</div>
  </div>
  <!-- card 3 -->
  <div class="card" style="top:690px;height:196px">
    
  </div>
</div>

<!-- ================= TOOLBAR ================= -->
<div id="tbar">
  <div class="abs" style="left:20px;top:11px;width:101px;height:40px;border:1.500px solid #0f5cbd;border-radius:8px;background:#e8f1fd"></div>
  <div class="tbtxt" style="left:36px;top:21px;font-size:17.800px;color:#474747">Replace</div>
  <div class="abs" style="left:136px;top:19px;width:25px;height:25px;border-radius:3px;background:#546e7a;border:1px solid #3f535d"></div>
  <div class="abs" style="left:177px;top:11px;width:40px;height:40px;border-radius:8px;background:#fff"></div>
  <div class="abs" style="left:225px;top:11px;width:40px;height:40px;border-radius:8px;background:#fff"></div>
  <div class="abs" style="left:273px;top:11px;width:40px;height:40px;border-radius:8px;background:#fff"></div>
  <svg class="abs" style="left:177px;top:11px" width="140" height="40" viewBox="605 69 140 40" fill="none" stroke="#333" stroke-width="1.300" stroke-linecap="round" stroke-linejoin="round">
    <!-- drop -->
    <path d="M625 81.400 C627.500 84.500 630.700 87.700 630.700 91 C630.700 94.200 628.200 96.500 625 96.500 C621.800 96.500 619.300 94.200 619.300 91 C619.300 87.700 622.500 84.500 625 81.400Z"/>
    <path d="M619.400 91.200 L630.600 91.200 M621.500 95 L625 91.500 M624.200 96.300 L629 91.500 M627.500 95.600 L630.400 92.700" stroke-width="1"/>
    <!-- flip -->
    <path d="M673 80.800 L673 96.800" stroke-width="1.500"/>
    <path d="M669.700 84 L669.700 93.600 L665.300 93.600Z M676.300 84 L676.300 93.600 L680.700 93.600Z"/>
    <!-- link -->
    <path d="M719.300 90.700 L724.200 85.800" stroke-width="1.500"/>
    <path d="M720.500 85.200 L722.700 83 C724.400 81.300 727 81.300 728.600 82.900 C730.200 84.500 730.200 87.100 728.500 88.800 L726.300 91 M722.500 91.600 L720.300 93.800 C718.600 95.500 716 95.500 714.400 93.900 C712.800 92.300 712.800 89.700 714.500 88 L716.700 85.800" stroke-width="1.500"/>
  </svg>
  <div class="vdiv" style="left:321px;top:19px;height:25px"></div>
  <div class="tbtxt" style="left:345px;top:21px;font-size:17.500px;color:#474747;letter-spacing:.5px">Alt text</div>
  <!-- right group -->
  <svg class="abs" style="left:647px;top:18px" width="24" height="24" viewBox="1075 76 24 24" fill="none" stroke="#333" stroke-width="1.300" stroke-linejoin="round" stroke-linecap="round">
    <path d="M1088 80.400 L1095.800 84.500 L1088 88.600 L1080.200 84.500Z"/>
    <path d="M1080.200 88 L1088 92.100 L1095.800 88 M1080.200 91.500 L1088 95.600 L1095.800 91.500"/>
  </svg>
  <div class="tbtxt" style="left:679px;top:20px;font-size:17.500px;color:#474747;letter-spacing:.25px">Layers</div>
  <div class="vdiv" style="left:761px;top:18px;height:25px"></div>
  <svg class="abs" style="left:785px;top:18px" width="24" height="24" viewBox="1213 76 24 24" fill="none" stroke="#bdbdbd" stroke-width="1.300" stroke-linecap="round">
    <path d="M1216.200 81.200 L1229.800 81.200 M1216.200 94.600 L1229.800 94.600"/>
    <rect x="1218.200" y="85.300" width="9.800" height="5.200" rx="2"/>
  </svg>
  <div class="tbtxt" style="left:814px;top:20px;font-size:17.500px;color:#bdbdbd;letter-spacing:.25px">Align</div>
  <div class="vdiv" style="left:883px;top:18px;height:25px"></div>
  <div class="abs" style="left:894px;top:10px;width:40px;height:40px;border-radius:8px;background:#eaf2fc"></div>
  <svg class="abs" style="left:894px;top:10px" width="190" height="40" viewBox="1322 68 190 40" fill="none" stroke-linejoin="round" stroke-linecap="round">
    <!-- group -->
    <g stroke="#1455b3" stroke-width="1.300">
      <rect x="1335.600" y="82.100" width="8" height="8"/>
      <rect x="1340.600" y="86.800" width="8" height="8"/>
    </g>
    <g fill="#1455b3">
      <rect x="1334.500" y="81" width="2.200" height="2.200"/><rect x="1342.500" y="81" width="2.200" height="2.200"/><rect x="1334.500" y="89" width="2.200" height="2.200"/><rect x="1342.500" y="89" width="2.200" height="2.200"/>
      <rect x="1339.500" y="85.700" width="2.200" height="2.200"/><rect x="1347.500" y="85.700" width="2.200" height="2.200"/><rect x="1339.500" y="93.700" width="2.200" height="2.200"/><rect x="1347.500" y="93.700" width="2.200" height="2.200"/>
    </g>
    <!-- lock -->
    <g stroke="#c2c2c2" stroke-width="1.400">
      <rect x="1386" y="86.800" width="12" height="8.500" rx="1.500"/>
      <path d="M1388.900 86.600 L1388.900 83 C1388.900 80.700 1390.400 79.500 1392.300 79.500 C1394.200 79.500 1395.700 80.700 1395.700 83 L1395.700 84.300"/>
      <path d="M1391.600 91.300 L1392.400 91.300"/>
    </g>
    <!-- copy -->
    <g stroke="#2d2d2d" stroke-width="1.500">
      <path d="M1438 91.600 L1437.300 91.600 Q1434.900 91.600 1434.900 89.200 L1434.900 83 Q1434.900 80.600 1437.300 80.600 L1443.400 80.600 Q1445.800 80.600 1445.800 83 L1445.800 83.700"/>
      <rect x="1438.300" y="84" width="10.900" height="10.900" rx="2.400"/>
      <path d="M1443.750 87.200 L1443.750 91.800 M1441.400 89.500 L1446.100 89.500" stroke-width="1.200"/>
    </g>
    <!-- trash -->
    <g stroke="#2d2d2d" stroke-width="1.500">
      <path d="M1485 83.600 L1499 83.600 M1489.300 83.400 L1489.300 80.700 L1494.800 80.700 L1494.800 83.400"/>
      <path d="M1486.500 83.800 L1487.600 94 Q1487.800 95.400 1489.200 95.400 L1494.900 95.400 Q1496.300 95.400 1496.500 94 L1497.600 83.800"/>
      <path d="M1490.500 86.800 L1490.500 92.300 M1493.700 86.800 L1493.700 92.300"/>
    </g>
  </svg>
</div>

<!-- ================= CANVAS ================= -->
<div id="canvas">
  <svg class="abs" style="left:260px;top:22px" width="566" height="724" viewBox="0 0 566 724" font-family="'Liberation Serif',serif">
    <defs>
      <pattern id="spk" width="130" height="130" patternUnits="userSpaceOnUse"><g fill="#9dbfba" opacity="0.800"><ellipse cx="42.5" cy="20.3" rx="0.38" ry="0.64" opacity="0.38" transform="rotate(-35 42.5 20.3)"/><ellipse cx="66.0" cy="5.8" rx="0.38" ry="0.40" opacity="0.40" transform="rotate(26 66.0 5.8)"/><ellipse cx="16.8" cy="29.6" rx="0.78" ry="0.67" opacity="0.39" transform="rotate(38 16.8 29.6)"/><ellipse cx="7.0" cy="110.9" rx="0.41" ry="0.41" opacity="0.36" transform="rotate(25 7.0 110.9)"/><ellipse cx="24.1" cy="75.4" rx="0.52" ry="0.65" opacity="0.27" transform="rotate(-35 24.1 75.4)"/><ellipse cx="27.4" cy="88.1" rx="0.49" ry="0.67" opacity="0.41" transform="rotate(-16 27.4 88.1)"/><ellipse cx="102.7" cy="90.5" rx="0.61" ry="0.64" opacity="0.56" transform="rotate(18 102.7 90.5)"/><ellipse cx="37.9" cy="126.5" rx="0.54" ry="0.77" opacity="0.30" transform="rotate(0 37.9 126.5)"/><ellipse cx="6.0" cy="86.5" rx="0.73" ry="1.88" opacity="0.46" transform="rotate(15 6.0 86.5)"/><ellipse cx="77.1" cy="75.2" rx="0.73" ry="0.87" opacity="0.42" transform="rotate(13 77.1 75.2)"/><ellipse cx="8.8" cy="90.8" rx="0.80" ry="0.80" opacity="0.35" transform="rotate(-9 8.8 90.8)"/><ellipse cx="86.6" cy="3.9" rx="0.43" ry="0.41" opacity="0.27" transform="rotate(21 86.6 3.9)"/><ellipse cx="17.6" cy="32.7" rx="0.74" ry="0.39" opacity="0.41" transform="rotate(3 17.6 32.7)"/><ellipse cx="114.1" cy="105.9" rx="0.61" ry="1.42" opacity="0.48" transform="rotate(30 114.1 105.9)"/><ellipse cx="123.6" cy="20.3" rx="0.45" ry="0.48" opacity="0.42" transform="rotate(7 123.6 20.3)"/><ellipse cx="34.6" cy="1.5" rx="0.52" ry="0.66" opacity="0.58" transform="rotate(15 34.6 1.5)"/><ellipse cx="67.0" cy="80.1" rx="0.37" ry="0.84" opacity="0.52" transform="rotate(29 67.0 80.1)"/><ellipse cx="103.1" cy="51.2" rx="0.40" ry="0.70" opacity="0.27" transform="rotate(-34 103.1 51.2)"/><ellipse cx="27.7" cy="21.8" rx="0.37" ry="0.35" opacity="0.30" transform="rotate(-31 27.7 21.8)"/><ellipse cx="47.5" cy="4.3" rx="0.75" ry="1.15" opacity="0.44" transform="rotate(-12 47.5 4.3)"/><ellipse cx="47.6" cy="16.7" rx="0.90" ry="1.47" opacity="0.52" transform="rotate(-33 47.6 16.7)"/><ellipse cx="14.1" cy="44.9" rx="0.72" ry="0.44" opacity="0.26" transform="rotate(36 14.1 44.9)"/><ellipse cx="68.6" cy="19.8" rx="0.36" ry="0.64" opacity="0.59" transform="rotate(29 68.6 19.8)"/><ellipse cx="90.1" cy="34.4" rx="0.43" ry="0.77" opacity="0.44" transform="rotate(22 90.1 34.4)"/><ellipse cx="43.2" cy="29.5" rx="0.89" ry="1.85" opacity="0.63" transform="rotate(25 43.2 29.5)"/><ellipse cx="95.7" cy="30.0" rx="0.51" ry="0.37" opacity="0.26" transform="rotate(-17 95.7 30.0)"/><ellipse cx="34.2" cy="89.6" rx="1.27" ry="2.51" opacity="0.85" transform="rotate(36 34.2 89.6)"/><ellipse cx="47.7" cy="29.2" rx="0.44" ry="0.46" opacity="0.47" transform="rotate(32 47.7 29.2)"/><ellipse cx="108.6" cy="62.4" rx="0.71" ry="0.40" opacity="0.48" transform="rotate(32 108.6 62.4)"/><ellipse cx="101.1" cy="97.0" rx="0.43" ry="0.78" opacity="0.37" transform="rotate(24 101.1 97.0)"/><ellipse cx="125.4" cy="51.7" rx="0.78" ry="0.75" opacity="0.31" transform="rotate(-29 125.4 51.7)"/><ellipse cx="20.3" cy="116.8" rx="0.56" ry="1.83" opacity="0.69" transform="rotate(12 20.3 116.8)"/><ellipse cx="45.9" cy="71.2" rx="0.36" ry="0.88" opacity="0.48" transform="rotate(2 45.9 71.2)"/><ellipse cx="120.5" cy="56.5" rx="0.83" ry="1.21" opacity="0.44" transform="rotate(-16 120.5 56.5)"/><ellipse cx="31.8" cy="76.1" rx="0.54" ry="0.42" opacity="0.57" transform="rotate(-11 31.8 76.1)"/><ellipse cx="59.6" cy="75.7" rx="0.67" ry="1.92" opacity="0.53" transform="rotate(2 59.6 75.7)"/><ellipse cx="68.0" cy="3.4" rx="0.43" ry="0.35" opacity="0.53" transform="rotate(-26 68.0 3.4)"/><ellipse cx="61.6" cy="93.8" rx="0.50" ry="0.64" opacity="0.44" transform="rotate(22 61.6 93.8)"/><ellipse cx="14.6" cy="72.7" rx="0.47" ry="0.77" opacity="0.43" transform="rotate(4 14.6 72.7)"/><ellipse cx="98.3" cy="117.8" rx="0.63" ry="0.63" opacity="0.43" transform="rotate(15 98.3 117.8)"/><ellipse cx="58.9" cy="69.3" rx="0.77" ry="0.73" opacity="0.56" transform="rotate(35 58.9 69.3)"/><ellipse cx="34.2" cy="72.6" rx="0.84" ry="1.14" opacity="0.39" transform="rotate(-4 34.2 72.6)"/><ellipse cx="10.3" cy="31.8" rx="0.65" ry="0.78" opacity="0.56" transform="rotate(-27 10.3 31.8)"/><ellipse cx="92.7" cy="85.5" rx="0.75" ry="0.88" opacity="0.33" transform="rotate(36 92.7 85.5)"/><ellipse cx="52.0" cy="63.4" rx="1.50" ry="1.43" opacity="0.71" transform="rotate(1 52.0 63.4)"/><ellipse cx="44.4" cy="26.1" rx="0.67" ry="0.36" opacity="0.44" transform="rotate(-4 44.4 26.1)"/><ellipse cx="3.3" cy="43.4" rx="0.58" ry="0.39" opacity="0.59" transform="rotate(23 3.3 43.4)"/><ellipse cx="125.4" cy="14.4" rx="0.37" ry="0.78" opacity="0.34" transform="rotate(-29 125.4 14.4)"/><ellipse cx="55.0" cy="117.7" rx="0.60" ry="1.15" opacity="0.67" transform="rotate(5 55.0 117.7)"/><ellipse cx="90.7" cy="12.5" rx="0.66" ry="0.58" opacity="0.28" transform="rotate(35 90.7 12.5)"/><ellipse cx="82.2" cy="103.6" rx="0.74" ry="0.39" opacity="0.55" transform="rotate(-3 82.2 103.6)"/><ellipse cx="44.4" cy="71.8" rx="0.61" ry="1.13" opacity="0.53" transform="rotate(-20 44.4 71.8)"/><ellipse cx="15.0" cy="21.7" rx="0.44" ry="0.52" opacity="0.36" transform="rotate(20 15.0 21.7)"/><ellipse cx="38.1" cy="65.0" rx="0.51" ry="0.36" opacity="0.34" transform="rotate(-38 38.1 65.0)"/><ellipse cx="94.8" cy="71.5" rx="0.56" ry="0.86" opacity="0.29" transform="rotate(25 94.8 71.5)"/><ellipse cx="56.3" cy="64.4" rx="0.66" ry="1.51" opacity="0.59" transform="rotate(38 56.3 64.4)"/><ellipse cx="44.9" cy="107.5" rx="0.64" ry="0.57" opacity="0.37" transform="rotate(-35 44.9 107.5)"/><ellipse cx="17.6" cy="10.1" rx="0.47" ry="0.44" opacity="0.28" transform="rotate(27 17.6 10.1)"/><ellipse cx="112.4" cy="86.8" rx="0.46" ry="0.51" opacity="0.41" transform="rotate(-27 112.4 86.8)"/><ellipse cx="58.1" cy="34.7" rx="1.58" ry="1.97" opacity="0.66" transform="rotate(37 58.1 34.7)"/><ellipse cx="40.6" cy="46.6" rx="0.52" ry="0.61" opacity="0.43" transform="rotate(-23 40.6 46.6)"/><ellipse cx="65.6" cy="1.6" rx="0.39" ry="0.57" opacity="0.26" transform="rotate(-38 65.6 1.6)"/><ellipse cx="39.9" cy="30.8" rx="0.59" ry="0.76" opacity="0.48" transform="rotate(17 39.9 30.8)"/><ellipse cx="113.5" cy="50.9" rx="0.79" ry="0.43" opacity="0.50" transform="rotate(11 113.5 50.9)"/><ellipse cx="6.6" cy="107.9" rx="0.75" ry="1.73" opacity="0.63" transform="rotate(-28 6.6 107.9)"/><ellipse cx="68.0" cy="65.6" rx="0.82" ry="1.83" opacity="0.55" transform="rotate(31 68.0 65.6)"/><ellipse cx="88.4" cy="89.7" rx="0.36" ry="0.42" opacity="0.38" transform="rotate(-31 88.4 89.7)"/><ellipse cx="108.0" cy="72.5" rx="0.63" ry="0.72" opacity="0.42" transform="rotate(-39 108.0 72.5)"/><ellipse cx="103.1" cy="96.8" rx="0.59" ry="0.71" opacity="0.27" transform="rotate(18 103.1 96.8)"/><ellipse cx="33.3" cy="10.5" rx="0.68" ry="0.46" opacity="0.51" transform="rotate(38 33.3 10.5)"/><ellipse cx="64.2" cy="50.0" rx="0.66" ry="0.77" opacity="0.47" transform="rotate(11 64.2 50.0)"/><ellipse cx="10.9" cy="19.9" rx="0.68" ry="0.52" opacity="0.45" transform="rotate(-39 10.9 19.9)"/><ellipse cx="8.8" cy="35.4" rx="0.66" ry="0.72" opacity="0.35" transform="rotate(1 8.8 35.4)"/><ellipse cx="60.5" cy="60.7" rx="0.75" ry="0.46" opacity="0.59" transform="rotate(34 60.5 60.7)"/><ellipse cx="3.2" cy="59.7" rx="0.89" ry="1.45" opacity="0.44" transform="rotate(-23 3.2 59.7)"/><ellipse cx="122.0" cy="28.0" rx="0.41" ry="0.64" opacity="0.58" transform="rotate(-29 122.0 28.0)"/><ellipse cx="106.0" cy="66.1" rx="0.78" ry="1.23" opacity="0.66" transform="rotate(-1 106.0 66.1)"/><ellipse cx="4.2" cy="1.5" rx="0.55" ry="0.52" opacity="0.30" transform="rotate(-12 4.2 1.5)"/><ellipse cx="41.5" cy="108.5" rx="0.69" ry="0.81" opacity="0.29" transform="rotate(34 41.5 108.5)"/><ellipse cx="92.3" cy="116.4" rx="0.52" ry="0.57" opacity="0.60" transform="rotate(7 92.3 116.4)"/><ellipse cx="47.2" cy="55.8" rx="0.37" ry="0.41" opacity="0.54" transform="rotate(-17 47.2 55.8)"/><ellipse cx="120.8" cy="32.9" rx="0.58" ry="0.45" opacity="0.38" transform="rotate(36 120.8 32.9)"/><ellipse cx="114.2" cy="104.9" rx="0.76" ry="0.87" opacity="0.44" transform="rotate(17 114.2 104.9)"/><ellipse cx="7.3" cy="94.7" rx="0.69" ry="0.70" opacity="0.35" transform="rotate(-36 7.3 94.7)"/><ellipse cx="119.6" cy="17.3" rx="0.50" ry="0.51" opacity="0.51" transform="rotate(38 119.6 17.3)"/><ellipse cx="34.3" cy="85.0" rx="0.60" ry="0.57" opacity="0.31" transform="rotate(-27 34.3 85.0)"/><ellipse cx="27.6" cy="117.0" rx="0.45" ry="0.85" opacity="0.60" transform="rotate(-4 27.6 117.0)"/><ellipse cx="18.9" cy="25.6" rx="0.50" ry="0.40" opacity="0.33" transform="rotate(-19 18.9 25.6)"/><ellipse cx="73.9" cy="114.6" rx="0.54" ry="0.58" opacity="0.43" transform="rotate(-9 73.9 114.6)"/><ellipse cx="44.3" cy="8.9" rx="0.79" ry="0.42" opacity="0.43" transform="rotate(10 44.3 8.9)"/><ellipse cx="111.4" cy="28.6" rx="0.46" ry="0.57" opacity="0.41" transform="rotate(36 111.4 28.6)"/><ellipse cx="109.6" cy="112.7" rx="0.36" ry="0.74" opacity="0.56" transform="rotate(-2 109.6 112.7)"/><ellipse cx="76.2" cy="1.0" rx="0.77" ry="0.80" opacity="0.55" transform="rotate(37 76.2 1.0)"/><ellipse cx="32.8" cy="15.0" rx="0.59" ry="0.73" opacity="0.58" transform="rotate(17 32.8 15.0)"/><ellipse cx="83.9" cy="98.9" rx="0.60" ry="0.37" opacity="0.52" transform="rotate(-21 83.9 98.9)"/><ellipse cx="118.7" cy="83.6" rx="0.41" ry="0.49" opacity="0.47" transform="rotate(15 118.7 83.6)"/><ellipse cx="15.4" cy="10.0" rx="0.61" ry="0.56" opacity="0.33" transform="rotate(8 15.4 10.0)"/><ellipse cx="2.3" cy="39.6" rx="0.78" ry="0.70" opacity="0.56" transform="rotate(-1 2.3 39.6)"/><ellipse cx="31.1" cy="32.6" rx="1.42" ry="1.63" opacity="0.61" transform="rotate(0 31.1 32.6)"/><ellipse cx="87.3" cy="54.8" rx="0.65" ry="0.86" opacity="0.33" transform="rotate(-37 87.3 54.8)"/><ellipse cx="44.3" cy="54.8" rx="0.44" ry="0.79" opacity="0.51" transform="rotate(0 44.3 54.8)"/><ellipse cx="27.3" cy="125.1" rx="0.72" ry="0.48" opacity="0.33" transform="rotate(20 27.3 125.1)"/><ellipse cx="38.8" cy="122.8" rx="0.43" ry="0.47" opacity="0.40" transform="rotate(13 38.8 122.8)"/><ellipse cx="122.4" cy="19.7" rx="0.45" ry="0.89" opacity="0.30" transform="rotate(-35 122.4 19.7)"/><ellipse cx="8.7" cy="51.3" rx="0.85" ry="1.73" opacity="0.70" transform="rotate(34 8.7 51.3)"/><ellipse cx="43.1" cy="24.7" rx="0.80" ry="1.03" opacity="0.58" transform="rotate(-9 43.1 24.7)"/><ellipse cx="48.9" cy="43.5" rx="0.35" ry="0.50" opacity="0.37" transform="rotate(36 48.9 43.5)"/><ellipse cx="16.8" cy="124.4" rx="0.51" ry="0.80" opacity="0.54" transform="rotate(-5 16.8 124.4)"/><ellipse cx="7.3" cy="61.6" rx="0.76" ry="0.46" opacity="0.38" transform="rotate(31 7.3 61.6)"/><ellipse cx="4.9" cy="53.6" rx="0.81" ry="1.04" opacity="0.36" transform="rotate(-34 4.9 53.6)"/><ellipse cx="118.8" cy="33.9" rx="0.75" ry="0.54" opacity="0.35" transform="rotate(36 118.8 33.9)"/><ellipse cx="80.0" cy="34.6" rx="0.49" ry="0.50" opacity="0.25" transform="rotate(20 80.0 34.6)"/><ellipse cx="118.3" cy="82.1" rx="0.51" ry="1.23" opacity="0.52" transform="rotate(36 118.3 82.1)"/><ellipse cx="123.1" cy="50.5" rx="0.54" ry="0.62" opacity="0.57" transform="rotate(-25 123.1 50.5)"/><ellipse cx="103.7" cy="95.5" rx="0.81" ry="1.61" opacity="0.46" transform="rotate(-14 103.7 95.5)"/><ellipse cx="47.3" cy="101.1" rx="0.44" ry="0.76" opacity="0.34" transform="rotate(-34 47.3 101.1)"/><ellipse cx="5.3" cy="71.7" rx="0.79" ry="0.84" opacity="0.60" transform="rotate(-18 5.3 71.7)"/><ellipse cx="11.8" cy="13.3" rx="0.67" ry="0.60" opacity="0.33" transform="rotate(-6 11.8 13.3)"/><ellipse cx="80.4" cy="87.3" rx="0.73" ry="0.72" opacity="0.29" transform="rotate(27 80.4 87.3)"/><ellipse cx="38.6" cy="73.6" rx="0.68" ry="0.46" opacity="0.34" transform="rotate(-20 38.6 73.6)"/></g></pattern>
      <clipPath id="dclip"><rect x="0" y="0" width="566" height="724"/></clipPath>
      <marker id="arr" viewBox="0 0 6 6" refX="5.5" refY="3" markerWidth="4.200" markerHeight="4.200" markerUnits="userSpaceOnUse" orient="auto"><path d="M0 0.3 L6 3 L0 5.7Z" fill="#546e7a"/></marker>
    </defs>
    <g clip-path="url(#dclip)">
      <rect x="0" y="0" width="566" height="724" fill="#b4d3ce"/>
      <!-- waves -->
      <path d="M120 242 L120 150 L164 109 C166 107.500 167.500 106.500 170 104.500 C175.100 99.300 186.300 85 194.400 77.700 C202.500 70.400 210.600 65.500 218.700 60.700 C226.800 55.900 234.900 52.200 243 48.600 C251.100 45 259.200 42.100 267.300 38.900 C275.400 35.700 283.400 32.500 291.500 29.600 C299.600 26.700 307.700 24.200 315.800 21.400 C323.900 18.600 332 15.400 340.100 12.600 C348.200 9.800 358.200 6.500 364.400 4.400 C370.500 2.300 372.700 1.500 377 0 L566 0 L566 242Z" fill="#f9bda9"/>
      <path d="M0 80.500 C15 77 35 73.500 50 74 C80 75.500 105 80 129 89.600 C145 96 155 103 164 109 C175 116 186 125 197 131 C240 152 320 143 369 146 C385 147 400 147.500 409 149 C425 152 440 157 455 163 C480 174 500 186 516 195 C530 203 550 212 566 218 L566 242 L0 242Z" fill="#fbcdb9"/>
      <path d="M566 187 C552 190.500 536 195 520.700 198.900 C508 203 497 207.500 487 211.700 C476 216 465 220.500 454 225.200 C440 231 426 236.500 410 242 L566 242Z" fill="#fbd7c6"/>
      <path d="M120 242 L120 150 L164 109 C166 107.500 167.500 106.500 170 104.500 C175.100 99.300 186.300 85 194.400 77.700 C202.500 70.400 210.600 65.500 218.700 60.700 C226.800 55.900 234.900 52.200 243 48.600 C251.100 45 259.200 42.100 267.300 38.900 C275.400 35.700 283.400 32.500 291.500 29.600 C299.600 26.700 307.700 24.200 315.800 21.400 C323.900 18.600 332 15.400 340.100 12.600 C348.200 9.800 358.200 6.500 364.400 4.400 C370.500 2.300 372.700 1.500 377 0 L566 0 L566 242Z" fill="url(#spk)"/>
      <path d="M0 80.500 C15 77 35 73.500 50 74 C80 75.500 105 80 129 89.600 C145 96 155 103 164 109 L164 242 L0 242Z" fill="url(#spk)"/>
      <!-- logo -->
      <g fill="#546e7a">
        <path d="M60.700 40 C66.800 40 71.700 44.300 71.700 49.700 C71.700 52.300 70.600 54.600 68.800 56.300 L71.400 60.900 L66 58.300 C64.400 59 62.600 59.400 60.700 59.400 C54.600 59.400 49.700 55.100 49.700 49.700 C49.700 44.300 54.600 40 60.700 40Z"/>
        <path d="M52.400 32.700 C58.400 32.700 63.200 36.900 63.200 42.200 C63.200 47.500 58.400 51.700 52.400 51.700 C50.600 51.700 48.900 51.300 47.400 50.700 L41.300 54.200 L43.900 48.200 C42.400 46.500 41.600 44.400 41.600 42.200 C41.600 36.900 46.400 32.700 52.400 32.700Z" fill="#b4d3ce" stroke="#546e7a" stroke-width="1.100"/>
      </g>
      <g font-weight="bold" fill="#546e7a" font-size="12">
        <text x="79.900" y="43.800" textLength="66.700" lengthAdjust="spacingAndGlyphs">Wave Digital</text>
        <text x="79.900" y="56.600" textLength="96.300" lengthAdjust="spacingAndGlyphs">Marketing Agency</text>
      </g>
      <g font-weight="bold" fill="#546e7a" font-size="10.500" text-anchor="end">
        <text x="526" y="41.700" textLength="43" lengthAdjust="spacingAndGlyphs">Follow us</text>
        <text x="526" y="55.100" textLength="64" lengthAdjust="spacingAndGlyphs">@WaveDigital</text>
        <text x="526" y="79.900" textLength="88" lengthAdjust="spacingAndGlyphs">Join the discussion</text>
        <text x="526" y="93" font-style="italic" textLength="86" lengthAdjust="spacingAndGlyphs">#DigitalMarketing</text>
      </g>
      <!-- monitor -->
      <rect x="197.200" y="89.200" width="171.400" height="123.500" fill="#546e7a"/>
      <rect x="204.600" y="96.100" width="157.400" height="109.200" fill="#b4d3ce"/>
      <rect x="269" y="212.700" width="28.100" height="15.500" fill="#455a64"/>
      <path d="M230.700 242 L230.700 235.300 Q230.700 227.600 238.400 227.600 L328 227.600 Q335.700 227.600 335.700 235.300 L335.700 242Z" fill="#455a64"/>
      <!-- connectors -->
      <g fill="none" stroke="#546e7a" stroke-width="1.400" stroke-dasharray="4.800 4.800">
        <path d="M219 150.600 L109.700 150.600 L109.700 276.800" marker-end="url(#arr)"/>
        <path d="M171.600 310.200 L256.300 310.200"/>
        <path d="M311 310.200 L392.500 310.200" marker-end="url(#arr)"/>
        <path d="M109.600 341.900 L109.600 370.700"/>
        <path d="M109.600 425.500 L109.600 460.300" marker-end="url(#arr)"/>
        <path d="M173 504.400 L219 504.400" marker-end="url(#arr)"/>
        <path d="M457 353 L457 504.400 L348.200 504.400" marker-end="url(#arr)"/>
        <path d="M283.600 548 L283.600 587.500" marker-end="url(#arr)"/>
        <path d="M347.200 632 L392.800 632" marker-end="url(#arr)"/>
      </g>
      <!-- start box -->
      <rect x="219.300" y="112.600" width="127.600" height="75.500" rx="15.500" fill="#fff" stroke="#546e7a" stroke-width="1.200"/>
      <text x="283.200" y="130.800" font-size="11.200" fill="#6b6f7b" text-anchor="middle" textLength="99" lengthAdjust="spacingAndGlyphs">Start browsing email</text>
      <!-- open mail icon -->
      <g fill="none" stroke="#546e7a" stroke-width="1.300" stroke-linejoin="round">
        <path d="M265.500 157 L282.200 144 Q283.400 143.100 284.600 144 L301.500 157 L301.500 179 L265.500 179Z" fill="#fff"/>
        <path d="M271.400 162 L271.400 155.700 L295.800 155.700 L295.800 162" stroke-linejoin="miter"/>
        <path d="M275 159.700 L291.400 159.700 M275 163.200 L291.400 163.200"/>
        <path d="M265.500 157 L276.500 167 M301.500 157 L290.500 167"/>
        <path d="M265.500 177.500 L282.200 164.800 Q283.400 164 284.600 164.800 L301.500 177.500"/>
      </g>
      <!-- diamond -->
      <path d="M46.900 309.600 L109.300 277.800 L171.600 309.600 L109.300 341.900Z" fill="#f0ab92" stroke="#546e7a" stroke-width="1.200"/>
      <g font-size="10.800" fill="#6c7883" text-anchor="middle">
        <text x="108" y="307.500" textLength="26.600" lengthAdjust="spacingAndGlyphs">Reply</text>
        <text x="109.300" y="319.600" textLength="40" lengthAdjust="spacingAndGlyphs">needed?</text>
      </g>
      <!-- thumbs -->
      <circle cx="283" cy="309.400" r="26.700" fill="#546e7a"/>
      <g transform="translate(283 309.400) scale(1 -1)"><path d="M-12.300 -1.500 L-2.900 -13.500 Q-1.500 -15.200 0.400 -14.500 Q2.200 -13.800 1.500 -11.800 L-2.300 -3.500 L8.200 -3.500 Q11.200 -3.300 10.600 -0.800 Q12.300 0.800 11 3 Q12.300 5 11 7 Q12 9 10.700 10.800 Q11.200 13.800 8.500 13.800 L-8.500 13.800 Q-12.300 13.800 -12.300 10Z" fill="none" stroke="#fff" stroke-width="1.300" stroke-linejoin="round"/></g>
      <circle cx="109.700" cy="397.700" r="27" fill="#546e7a"/>
      <g transform="translate(109.700 397.700)"><path d="M-12.300 -1.500 L-2.900 -13.500 Q-1.500 -15.200 0.400 -14.500 Q2.200 -13.800 1.500 -11.800 L-2.300 -3.500 L8.200 -3.500 Q11.200 -3.300 10.600 -0.800 Q12.300 0.800 11 3 Q12.300 5 11 7 Q12 9 10.700 10.800 Q11.200 13.800 8.500 13.800 L-8.500 13.800 Q-12.300 13.800 -12.300 10Z" fill="none" stroke="#fff" stroke-width="1.300" stroke-linejoin="round"/></g>
      <!-- boxes -->
      <g fill="#fbd9c7" stroke="#546e7a" stroke-width="1.300">
        <rect x="393.500" y="265.900" width="127.500" height="87.100"/>
        <rect x="45.500" y="461.300" width="127.500" height="86.700"/>
        <rect x="220" y="461.300" width="127.200" height="86.700"/>
        <rect x="220.300" y="588.500" width="126.900" height="86.800"/>
        <rect x="393.800" y="588.500" width="127" height="86.800" rx="17.600" fill="#fff" stroke-width="1.100"/>
      </g>
      <g font-size="10.600" fill="#65727f" text-anchor="middle">
        <text x="457.700" y="283.800" textLength="37.400" lengthAdjust="spacingAndGlyphs">Remove</text>
        <text x="457.800" y="295.600" textLength="52.800" lengthAdjust="spacingAndGlyphs">from inbox</text>
        <text x="109.500" y="478.700" textLength="37.800" lengthAdjust="spacingAndGlyphs">Send an</text>
        <text x="109.600" y="490.600" textLength="53.200" lengthAdjust="spacingAndGlyphs">email reply</text>
        <text x="283.900" y="478.700" textLength="44.800" lengthAdjust="spacingAndGlyphs">Continue</text>
        <text x="284" y="490.600" textLength="75" lengthAdjust="spacingAndGlyphs">managing email</text>
        <text x="284" y="605.800" textLength="36.400" lengthAdjust="spacingAndGlyphs">Archive</text>
        <text x="284" y="618.700" textLength="56.400" lengthAdjust="spacingAndGlyphs">newsletters</text>
        <text x="457.400" y="605.800" textLength="48" lengthAdjust="spacingAndGlyphs">Finish and</text>
        <text x="457.400" y="618.700" textLength="79.300" lengthAdjust="spacingAndGlyphs">sign out of email</text>
      </g>
      <g fill="none" stroke="#546e7a" stroke-width="1.300" stroke-linejoin="miter">
        <!-- remove: envelope + circle x -->
        <path d="M459.500 337.500 L435.100 337.500 L435.100 308.400 L477.600 308.400 L477.600 327"/>
        <path d="M435.100 309 L453.500 326.300 Q456.800 329.200 460.100 326.300 L477.600 309"/>
        <path d="M435.100 334.800 L448.800 323 M464 323.400 L467 326.300"/>
        <circle cx="470.600" cy="336.500" r="7.900"/>
        <path d="M467.300 333.200 L473.900 339.800 M473.900 333.200 L467.300 339.800"/>
        <!-- send: envelope + reply arrow -->
        <rect x="92.200" y="503.300" width="35.100" height="24.300"/>
        <path d="M92.200 504 L106.800 518.300 Q109.700 520.800 112.600 518.300 L127.300 504"/>
        <path d="M92.200 525.500 L102.800 516.200 M127.300 525.500 L116.700 516.200"/>
        <path d="M98.300 529.200 L107 522.600 L107 526.300 C114 526.500 119.500 531 119.800 539.800 C117 534.500 113 532.300 107 532.200 L107 535.900Z" fill="#fbd9c7" stroke-width="1.200"/>
        <!-- checklist -->
        <rect x="265.800" y="503.500" width="9.600" height="9.500"/>
        <rect x="265.800" y="517" width="9.600" height="9.400"/>
        <rect x="265.800" y="530.500" width="9.600" height="9.100"/>
        <path d="M268 508 L270.300 510.600 L274.300 505.600 M268 521.500 L270.300 524.100 L274.300 519.100" stroke-width="1.200"/>
        <path d="M280.500 508 L302.800 508 M280.500 521.500 L302.800 521.500 M280.500 535 L302.800 535"/>
        <!-- newspaper -->
        <path d="M291.400 662 L291.400 630.700 L264.300 630.700 L264.300 662 Q264.300 667.100 269.400 667.100 L297.400 667.100"/>
        <path d="M291.400 636.200 L298.400 636.200 Q303.400 636.200 303.400 641.200 L303.400 661.100 Q303.400 667.100 297.400 667.100 Q291.400 667.100 291.400 661.100"/>
        <path d="M296.700 637.800 L296.700 660"/>
        <path d="M268.200 637.500 L286.400 637.500 M268.200 641 L286.400 641"/>
        <path d="M268.700 648 L275.500 648 M268.700 651.300 L275.500 651.300 M268.700 654.400 L275.500 654.400 M268.700 657.700 L275.500 657.700 M268.700 661 L275.500 661 M278.400 648 L286.400 648 M278.400 651.300 L286.400 651.300 M278.400 654.400 L286.400 654.400 M278.400 657.700 L286.400 657.700 M278.400 661 L286.400 661"/>
        <!-- lock bubble -->
        <path d="M457.700 630.700 C467.800 630.700 475.900 638 475.900 647.100 C475.900 656.200 467.800 663.500 457.700 663.500 C456.300 663.500 455 663.400 453.700 663.100 C450 666 445 667.300 439.500 666.500 C443 664.500 445 661.500 445.300 658.600 C441.700 655.700 439.500 651.600 439.500 647.100 C439.500 638 447.600 630.700 457.700 630.700Z" stroke-width="1.200"/>
        <rect x="451.300" y="644.800" width="12.900" height="8.600" stroke-width="1.200"/>
        <path d="M453.700 644.800 L453.700 642.500 Q453.700 638.300 457.700 638.300 Q461.700 638.300 461.700 642.500 L461.700 644.800" stroke-width="1.200"/>
        <path d="M457.700 648.300 L457.700 650.200" stroke-width="1.500"/>
      </g>
    </g>
  </svg>
  <!-- selection overlays (canvas coords = page - (428,106)) -->
  <svg class="abs" style="left:0;top:0" width="1088" height="746" viewBox="428 106 1088 746" fill="none">
    <rect x="907.100" y="240.600" width="127.700" height="75.500" stroke="#1a73e8" stroke-width="1.300"/>
    <rect x="952.300" y="270.400" width="38.400" height="38" stroke="#1a73e8" stroke-width="1.200"/>
    <g fill="#fff" stroke="#1a73e8" stroke-width="1.200">
      <circle cx="907" cy="240.700" r="6.300"/><circle cx="1034.800" cy="240.700" r="6.300"/><circle cx="907" cy="316.100" r="6.300"/><circle cx="1034.800" cy="316.100" r="6.300"/>
    </g>
    <g fill="#fff" stroke="#1a73e8" stroke-width="1.800">
      <circle cx="970.300" cy="225.600" r="6.800"/><circle cx="970.300" cy="330.400" r="6.800"/><circle cx="891.600" cy="277.400" r="6.800"/><circle cx="1049.800" cy="277.400" r="6.800"/>
    </g>
    <path d="M967 225.600 L973.600 225.600 M970.300 222.300 L970.300 228.900 M967 330.400 L973.600 330.400 M970.300 327.100 L970.300 333.700 M888.300 277.400 L894.900 277.400 M891.600 274.100 L891.600 280.700 M1046.500 277.400 L1053.100 277.400 M1049.800 274.100 L1049.800 280.700" stroke="#1a73e8" stroke-width="1.500"/>
  </svg>
  <!-- page navigator -->
  <div class="abs" style="left:1054px;top:152px;width:34px;height:305px;background:#fff;border-radius:5px 0 0 5px"></div>
  <div class="abs" style="left:1021px;top:275px;width:39px;height:38px;background:#fff;border-radius:7px 0 0 7px"></div>
  <div class="abs" style="left:1057px;top:199px;width:28px;height:27px;border:1px solid #6a6a6a;border-radius:4px;font-weight:bold;font-size:16px;line-height:25px;text-align:center;color:#444">1</div>
  <div class="abs" style="left:1054px;top:232px;width:34px;font-size:15px;line-height:18px;text-align:center;color:#444">of 1</div>
  <div class="abs" style="left:1057px;top:304px;width:28px;height:1px;background:#dedede"></div>
  <svg class="abs" style="left:1021px;top:152px" width="67" height="305" viewBox="1449 258 67 305" fill="none" stroke-linecap="round" stroke-linejoin="round">
    <path d="M1494 282.500 L1498.500 278 L1503 282.500 M1494 378 L1498.500 382.500 L1503 378" stroke="#a9a9a9" stroke-width="1.300"/>
    <path d="M1471.500 394 L1466 399.700 L1471.500 405.400" stroke="#1f3a5f" stroke-width="1.600"/>
    <g stroke="#2d2d2d" stroke-width="1.400">
      <path d="M1495 444.200 L1494.300 444.200 Q1492 444.200 1492 441.900 L1492 436.900 Q1492 434.600 1494.300 434.600 L1499.300 434.600 Q1501.600 434.600 1501.600 436.900 L1501.600 437.500"/>
      <rect x="1495.300" y="437.900" width="9.800" height="9.800" rx="2.200"/>
      <path d="M1500.200 440.700 L1500.200 444.900 M1498.100 442.800 L1502.300 442.800" stroke-width="1.100"/>
      <path d="M1491.800 490.800 L1505.200 490.800 M1498.500 484.100 L1498.500 497.500" stroke="#1f3a5f" stroke-width="1.500"/>
    </g>
    <g stroke="#c4c4c4" stroke-width="1.300">
      <path d="M1492 537.200 L1505 537.200 M1495.800 537 L1495.800 534.500 L1501.200 534.500 L1501.200 537"/>
      <path d="M1493.400 537.400 L1494.400 547 Q1494.600 548.300 1495.900 548.300 L1501.100 548.300 Q1502.400 548.300 1502.600 547 L1503.600 537.400"/>
      <path d="M1497 540.300 L1497 545.300 M1500 540.300 L1500 545.300"/>
    </g>
  </svg>
  <!-- zoom control -->
  <div class="abs" style="left:837px;top:678px;width:138px;height:38px;background:#fff;border-radius:5px;box-shadow:0 1px 4px rgba(0,0,0,.3)"></div>
  <div class="abs" style="left:876px;top:678px;width:1px;height:38px;background:#cfcfcf"></div>
  <div class="abs" style="left:935px;top:678px;width:1px;height:38px;background:#cfcfcf"></div>
  <div class="abs" style="left:877px;top:688px;width:58px;font-size:18px;line-height:20px;text-align:right;padding-right:5px;color:#444;letter-spacing:.3px">69%</div>
  <svg class="abs" style="left:837px;top:678px" width="138" height="38" viewBox="1265 784 138 38" fill="none" stroke="#222" stroke-width="1.500">
    <path d="M1280 803.200 L1289 803.200 M1378 803.200 L1388.200 803.200 M1383.100 798.100 L1383.100 808.300"/>
  </svg>
  <!-- chat button -->
  <div class="abs" style="left:1024px;top:667px;width:64px;height:64px;border-radius:50%;background:#0b2560;box-shadow:0 4px 14px rgba(0,0,0,.28)"></div>
  <svg class="abs" style="left:1024px;top:667px" width="64" height="64" viewBox="1452 773 64 64">
    <rect x="1467.800" y="795.200" width="32.600" height="16.700" rx="8.350" fill="#fff"/>
    <path d="M1487.600 815.100 L1494.300 815.100 L1494.300 821.300Z" fill="#fff"/>
  </svg>
</div>
<div id="vscroll">
  <div class="abs" style="left:2px;top:17px;width:13px;height:684px;background:#c1c1c1"></div>
  <svg class="abs" style="left:5px;top:7px" width="7" height="4" viewBox="0 0 7 4"><path d="M0 4 L3.500 0 L7 4Z" fill="#a3a3a3"/></svg>
  <svg class="abs" style="left:5px;top:736px" width="7" height="4" viewBox="0 0 7 4"><path d="M0 0 L3.500 4 L7 0Z" fill="#505050"/></svg>
</div>

</body>
</html>
